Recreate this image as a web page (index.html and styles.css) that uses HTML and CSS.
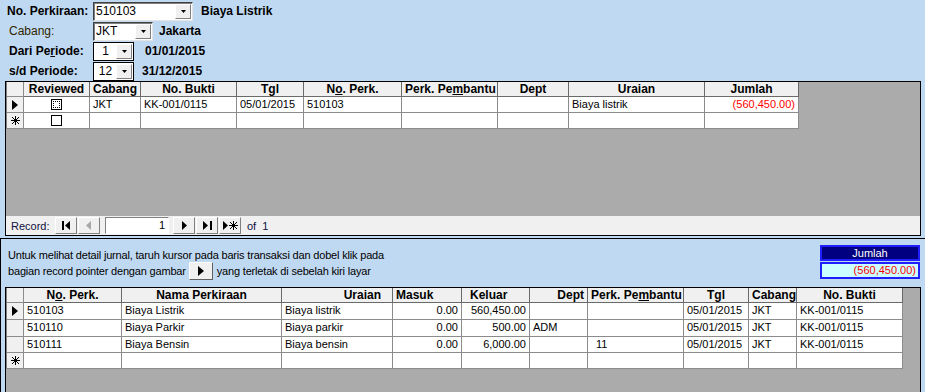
FILE: index.html
```html
<!DOCTYPE html>
<html>
<head>
<meta charset="utf-8">
<link rel="stylesheet" href="styles.css">
</head>
<body>
<div class="head">
  <div class="frow">
    <span class="lbl first">No. Perkiraan:</span>
    <div class="combo w100"><span class="cv">510103</span><span class="cb"><svg width="5" height="3" viewBox="0 0 5 3"><polygon points="0,0 5,0 2.5,3" fill="#000"/></svg></span></div>
    <span class="val g8">Biaya Listrik</span>
  </div>
  <div class="frow">
    <span class="lbl thin">Cabang:</span>
    <div class="combo w60"><span class="cv">JKT</span><span class="cb"><svg width="5" height="3" viewBox="0 0 5 3"><polygon points="0,0 5,0 2.5,3" fill="#000"/></svg></span></div>
    <span class="val g6">Jakarta</span>
  </div>
  <div class="frow">
    <span class="lbl">Dari Pe<u>r</u>iode:</span>
    <div class="combo w41 box"><span class="cv ctr">1</span><span class="cb"><svg width="5" height="3" viewBox="0 0 5 3"><polygon points="0,0 5,0 2.5,3" fill="#000"/></svg></span></div>
    <span class="val g11">01/01/2015</span>
  </div>
  <div class="frow">
    <span class="lbl">s/d Periode:</span>
    <div class="combo w41 box"><span class="cv ctr">12</span><span class="cb"><svg width="5" height="3" viewBox="0 0 5 3"><polygon points="0,0 5,0 2.5,3" fill="#000"/></svg></span></div>
    <span class="val g8">31/12/2015</span>
  </div>
</div>

<div class="sub top">
  <div class="grid gt">
    <div class="c h s"></div>
    <div class="c h">Reviewed</div>
    <div class="c h">Cabang</div>
    <div class="c h">No. Bukti</div>
    <div class="c h">Tgl</div>
    <div class="c h">N<u>o</u>. Perk.</div>
    <div class="c h">Perk. Pe<u>m</u>bantu</div>
    <div class="c h">Dept</div>
    <div class="c h">Uraian</div>
    <div class="c h">Jumlah</div>

    <div class="c s"><svg width="6" height="10" viewBox="0 0 6 10"><polygon points="0,0 6,5 0,10" fill="#000"/></svg></div>
    <div class="c ctr"><span class="chk focus"></span></div>
    <div class="c">JKT</div>
    <div class="c">KK-001/0115</div>
    <div class="c">05/01/2015</div>
    <div class="c">510103</div>
    <div class="c"></div>
    <div class="c"></div>
    <div class="c">Biaya listrik</div>
    <div class="c r red">(560,450.00)</div>

    <div class="c s"><svg width="9" height="9" viewBox="0 0 9 9"><path d="M4.5 0V9M0 4.5H9M1 1L8 8M8 1L1 8" stroke="#000" stroke-width="1"/></svg></div>
    <div class="c ctr"><span class="chk"></span></div>
    <div class="c"></div>
    <div class="c"></div>
    <div class="c"></div>
    <div class="c"></div>
    <div class="c"></div>
    <div class="c"></div>
    <div class="c"></div>
    <div class="c"></div>
  </div>
  <div class="fill"></div>
  <div class="nav">
    <span class="navlbl">Record:</span>
    <span class="nb"><svg width="9" height="9" viewBox="0 0 9 9"><rect x="0" y="0" width="2" height="9" fill="#000"/><polygon points="8,0 3,4.5 8,9" fill="#000"/></svg></span>
    <span class="nb"><svg width="6" height="9" viewBox="0 0 6 9"><polygon points="5,0 0,4.5 5,9" fill="#a8a8a8"/></svg></span>
    <span class="nfield">1</span>
    <span class="nb"><svg width="6" height="9" viewBox="0 0 6 9"><polygon points="1,0 6,4.5 1,9" fill="#000"/></svg></span>
    <span class="nb"><svg width="9" height="9" viewBox="0 0 9 9"><polygon points="0,0 5,4.5 0,9" fill="#000"/><rect x="7" y="0" width="2" height="9" fill="#000"/></svg></span>
    <span class="nb"><svg width="15" height="9" viewBox="0 0 15 9"><polygon points="0,0 5,4.5 0,9" fill="#000"/><path d="M10.5 0V9M6 4.5H15M7 1L14 8M14 1L7 8" stroke="#000" stroke-width="1"/></svg></span>
    <span class="navof">of&nbsp; 1</span>
  </div>
</div>

<div class="lower">
  <div class="info">
    <div class="txt">
      <div class="l1">Untuk melihat detail jurnal, taruh kursor pada baris transaksi dan dobel klik pada</div>
      <div class="l2"><span>bagian record pointer dengan gambar</span><span class="ptr"><svg width="6" height="10" viewBox="0 0 6 10"><polygon points="0,0 6,5 0,10" fill="#000"/></svg></span><span>yang terletak di sebelah kiri layar</span></div>
    </div>
    <div class="sum">
      <div class="sum-h">Jumlah</div>
      <div class="sum-v">(560,450.00)</div>
    </div>
  </div>

  <div class="sub bot">
    <div class="grid gb">
      <div class="c h s"></div>
      <div class="c h">N<u>o</u>. Perk.</div>
      <div class="c h">Nama Perkiraan</div>
      <div class="c h r pr11">Uraian</div>
      <div class="c h l">Masuk</div>
      <div class="c h l pl8">Keluar</div>
      <div class="c h r">Dept</div>
      <div class="c h l">Perk. Pe<u>m</u>bantu</div>
      <div class="c h">Tgl</div>
      <div class="c h l">Cabang</div>
      <div class="c h">No. Bukti</div>

      <div class="c s"><svg width="6" height="10" viewBox="0 0 6 10"><polygon points="0,0 6,5 0,10" fill="#000"/></svg></div>
      <div class="c">510103</div>
      <div class="c">Biaya Listrik</div>
      <div class="c">Biaya listrik</div>
      <div class="c r">0.00</div>
      <div class="c r">560,450.00</div>
      <div class="c"></div>
      <div class="c"></div>
      <div class="c">05/01/2015</div>
      <div class="c">JKT</div>
      <div class="c">KK-001/0115</div>

      <div class="c s"></div>
      <div class="c">510110</div>
      <div class="c">Biaya Parkir</div>
      <div class="c">Biaya parkir</div>
      <div class="c r">0.00</div>
      <div class="c r">500.00</div>
      <div class="c">ADM</div>
      <div class="c"></div>
      <div class="c">05/01/2015</div>
      <div class="c">JKT</div>
      <div class="c">KK-001/0115</div>

      <div class="c s"></div>
      <div class="c">510111</div>
      <div class="c">Biaya Bensin</div>
      <div class="c">Biaya bensin</div>
      <div class="c r">0.00</div>
      <div class="c r">6,000.00</div>
      <div class="c"></div>
      <div class="c pl8">11</div>
      <div class="c">05/01/2015</div>
      <div class="c">JKT</div>
      <div class="c">KK-001/0115</div>

      <div class="c s"><svg width="9" height="9" viewBox="0 0 9 9"><path d="M4.5 0V9M0 4.5H9M1 1L8 8M8 1L1 8" stroke="#000" stroke-width="1"/></svg></div>
      <div class="c"></div>
      <div class="c"></div>
      <div class="c"></div>
      <div class="c"></div>
      <div class="c"></div>
      <div class="c"></div>
      <div class="c"></div>
      <div class="c"></div>
      <div class="c"></div>
      <div class="c"></div>
    </div>
  </div>
</div>
</body>
</html>
```
FILE: styles.css
```css
* { box-sizing: border-box; }
html, body { margin: 0; padding: 0; }
body {
  width: 925px;
  height: 392px;
  overflow: hidden;
  background: #C0D9F2;
  font-family: "Liberation Sans", Arial, sans-serif;
  font-size: 11px;
  color: #000;
}

/* header form */
.head { padding-top: 1px; }
.frow { display: flex; align-items: center; height: 20px; }
.lbl {
  width: 93px;
  padding-left: 9px;
  font-size: 12px;
  font-weight: bold;
  white-space: nowrap;
}
.lbl.first { padding-left: 7px; }
.lbl.thin { font-weight: normal; color: #302600; }
.combo {
  display: flex;
  height: 19px;
  background: #fff;
  border: 1px solid;
  border-color: #404040 #e4e4e4 #e4e4e4 #404040;
  box-shadow: inset 1px 1px 0 #808080;
}
.combo.box { border-color: #000; box-shadow: none; }
.w100 { width: 100px; }
.w60 { width: 60px; }
.w41 { width: 41px; }
.cv { flex: 1; font-size: 12px; padding-left: 2px; line-height: 17px; }
.cv.ctr { text-align: center; }
.cb {
  width: 16px;
  margin: 1px;
  background: #F0F0F0;
  border: 1px solid;
  border-color: #fff #808080 #808080 #fff;
  display: flex;
  align-items: center;
  justify-content: center;
}
.cb svg { display: block; }
.val { font-size: 12px; font-weight: bold; white-space: nowrap; }
.g8 { margin-left: 8px; }
.g6 { margin-left: 6px; }
.g11 { margin-left: 11px; }

/* subforms */
.sub {
  margin: 0 4px 0 5px;
  border: 1px solid #000;
  background: #ABABAB;
  display: flex;
  flex-direction: column;
  overflow: hidden;
}
.sub.top { height: 155px; }
.sub.bot { height: 120px; margin-left: 4px; }

.grid {
  display: grid;
  width: max-content;
  border-left: 1px solid #808080;
  background: #fff;
}
.gt { grid-template-columns: 17px 66px 51px 96px 67px 98px 96px 71px 136px 94px; grid-auto-rows: 16px; grid-template-rows: 15px; }
.gb { grid-template-columns: 17px 98px 160px 111px 69px 68px 58px 96px 65px 48px 106px; grid-auto-rows: 16px; grid-template-rows: 15px 17px 17px 16px; }

.c {
  border-right: 1px solid #8c8c8c;
  border-bottom: 1px solid #8c8c8c;
  padding: 0 3px;
  white-space: nowrap;
  overflow: hidden;
  line-height: 15px;
  font-size: 11px;
}
.c.h {
  background: #F0F0F0;
  font-size: 12px;
  font-weight: bold;
  text-align: center;
  line-height: 14px;
  border-color: #6a6a6a;
}
.c.s {
  background: #F0F0F0;
  padding: 0;
  display: flex;
  align-items: center;
  justify-content: center;
  border-color: #8c8c8c;
}
.c.s svg { display: block; }
.c.r { text-align: right; }
.c.l { text-align: left; }
.c.ctr { display: flex; align-items: center; justify-content: center; }
.pr11 { padding-right: 11px; }
.pl8 { padding-left: 8px; }
.red { color: #FF0000; }

.chk {
  display: block;
  width: 11px;
  height: 11px;
  border: 1px solid #000;
  background: #fff;
}
.chk.focus { outline: 1px dotted #000; outline-offset: -3px; }

.fill { flex: 1; }

/* navigation bar */
.nav {
  height: 19px;
  background: #F0F0F0;
  display: flex;
  align-items: center;
  padding-left: 5px;
}
.navlbl { color: #101040; width: 44px; font-size: 11px; }
.nb {
  width: 22px;
  height: 17px;
  margin-right: 1px;
  background: #F0F0F0;
  border: 1px solid;
  border-color: #fff #808080 #808080 #fff;
  display: flex;
  align-items: center;
  justify-content: center;
}
.nb svg { display: block; }
.nfield {
  width: 64px;
  height: 17px;
  margin: 0 4px 0 4px;
  background: #fff;
  border: 1px solid;
  border-color: #808080 #fff #fff #808080;
  text-align: right;
  padding-right: 3px;
  line-height: 15px;
}
.navof { margin-left: 5px; color: #101040; }

/* lower */
.lower {
  margin-top: 2px;
  border-top: 1px solid #000;
  border-left: 1px solid #000;
}
.info {
  display: flex;
  justify-content: space-between;
  align-items: flex-start;
  height: 48px;
}
.txt { padding: 10px 0 0 7px; letter-spacing: -0.18px; }
.l1 { height: 13px; line-height: 13px; white-space: nowrap; }
.l2 { display: flex; align-items: center; height: 18px; white-space: nowrap; }
.ptr {
  width: 24px;
  height: 18px;
  margin: 0 4px 0 3px;
  background: #F0F0F0;
  border: 1px solid;
  border-color: #fff #606060 #606060 #fff;
  display: flex;
  align-items: center;
  justify-content: center;
}
.ptr svg { display: block; }
.sum { width: 100px; margin: 6px 5px 0 0; }
.sum-h {
  height: 16px;
  background: #000080;
  border: 2px solid #1E1EFF;
  color: #fff;
  text-align: center;
  line-height: 12px;
}
.sum-v {
  height: 17px;
  margin-top: 1px;
  background: #CCFFFF;
  border: 2px solid #1E1EFF;
  color: #FF0000;
  text-align: right;
  padding-right: 2px;
  line-height: 13px;
}
```
